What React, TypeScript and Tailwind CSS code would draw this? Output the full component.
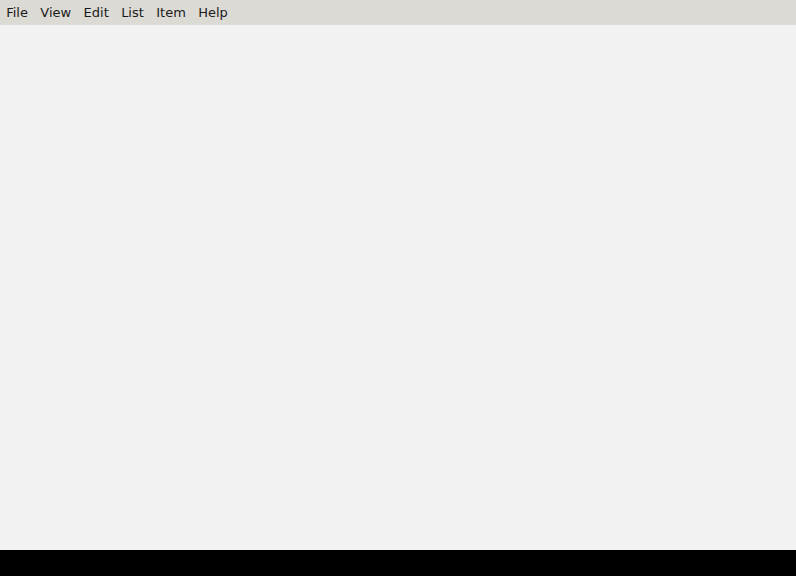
const MENUS = ["File", "View", "Edit", "List", "Item", "Help"];

export default function App() {
  return (
    <div
      className="flex h-[576px] w-[796px] flex-col bg-black"
      style={{ fontFamily: '"DejaVu Sans", sans-serif' }}
    >
      {/* menu bar */}
      <div className="flex h-[25px] shrink-0 items-center bg-[#dcdad5] text-[13px] text-[#1a1a1a]">
        {MENUS.map((m) => (
          <span key={m} className="px-[6.2px] leading-[25px]">
            {m}
          </span>
        ))}
      </div>
      {/* workspace */}
      <div className="h-[525px] bg-[#f2f2f2]" />
    </div>
  );
}
